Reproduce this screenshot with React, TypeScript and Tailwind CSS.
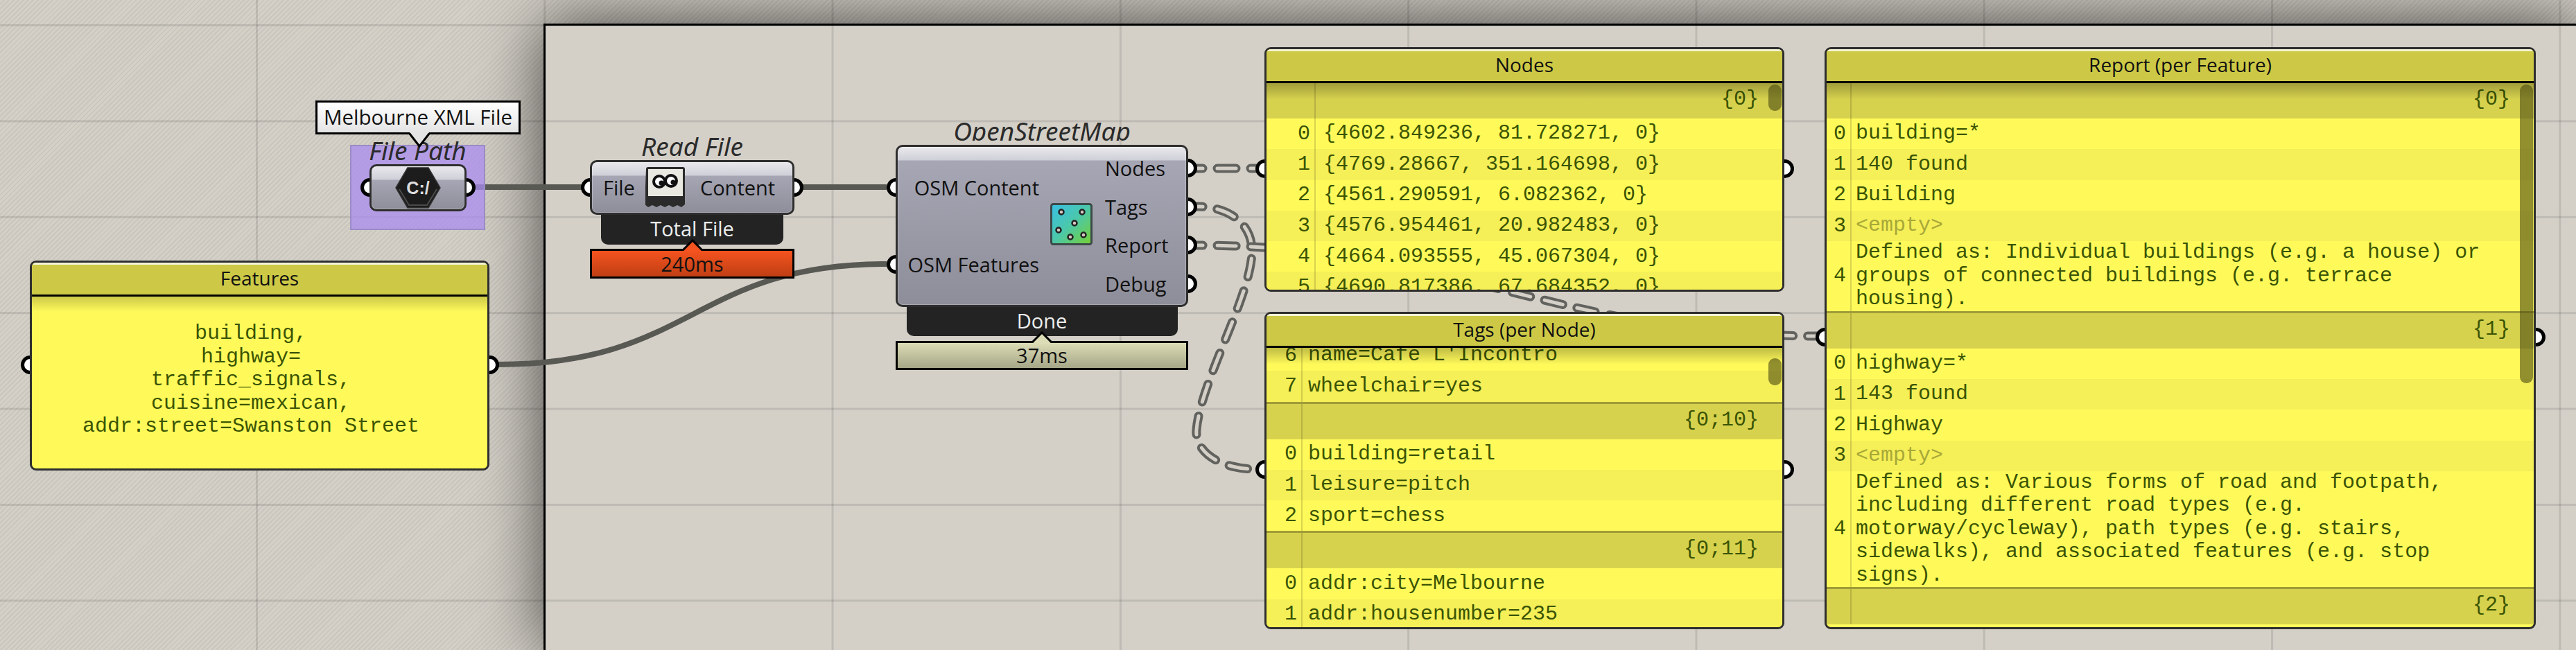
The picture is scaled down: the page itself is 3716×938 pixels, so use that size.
import type { ReactNode } from 'react';

const monoClass = 'font-["Liberation_Mono",monospace] text-[30px] text-[#3a5404]';
const labelClass = 'font-["Noto_Sans",sans-serif] text-[37px] italic leading-[40px] text-[#2b2b2b]';

const Port = ({ className }: { className: string }) => (
    <div className={`h-[27px] w-[27px] rounded-full border-[5px] border-black bg-white ${className}`} />
);

const dashedWires = [
    'M1726 243H1812',
    'M1726 298C1772 298 1806 322 1806 362C1806 425 1732 550 1726 620C1723 652 1760 677 1812 677',
    'M1726 354C2100 354 2246 485 2622 485',
];

const Wires = () => (
    <svg className="absolute left-0 top-0" width={3716} height={938} fill="none">
        <path d="M686 270H1279" stroke="#595954" strokeWidth={8} />
        <path d="M718 526C1000 526 1000 381 1279 381" stroke="#595954" strokeWidth={8} />
        {dashedWires.map((d) => (
            <g key={d}>
                <path d={d} stroke="#62625e" strokeWidth={13} strokeDasharray="27 21" strokeDashoffset={-30} strokeLinecap="round" />
                <path d={d} stroke="#d4d0c8" strokeWidth={5} strokeDasharray="27 21" strokeDashoffset={-30} strokeLinecap="round" />
            </g>
        ))}
    </svg>
);

type BodyProps = { className: string; children: ReactNode };

const NodeBody = ({ className, children }: BodyProps) => (
    <div
        className={`relative rounded-[10px] border-[3px] border-[#2e2e2e] bg-[linear-gradient(#e9e9ed,#cfcfd8_19px,#a6a6b4_20px,#8e8e9a)] shadow-[inset_0_0_0_1px_rgba(255,255,255,0.25)] text-[29px] text-[#111] ${className}`}
    >
        {children}
    </div>
);

const SidePorts = () => (
    <>
        <Port className="absolute left-[-16px] top-1/2 -z-10 -mt-[14px]" />
        <Port className="absolute right-[-16px] top-1/2 -z-10 -mt-[14px]" />
    </>
);

const Strip = ({ className, children }: BodyProps) => (
    <div className={`flex items-center justify-center rounded-b-[10px] bg-[#232323] text-[29px] text-[#eee] ${className}`}>{children}</div>
);

const TimeBar = ({ className, tip, children }: BodyProps & { tip: string }) => (
    <div className={`relative flex w-full items-center justify-center border-[3px] border-black text-[29px] text-[#111] ${className}`}>
        <svg className="absolute left-1/2 top-[-17px] -ml-[16px]" width={32} height={18}>
            <polygon points="2,18 16,2 30,18" fill={tip} />
            <polyline points="2,16 16,2 30,16" fill="none" stroke="#000" strokeWidth={3} />
        </svg>
        {children}
    </div>
);

const HexIcon = () => (
    <svg width={66} height={60} viewBox="0 0 66 60">
        <polygon points="1,30 18,1 48,1 65,30 48,59 18,59" fill="#1c1c1c" stroke="#333" strokeWidth={1.5} />
        <polyline points="6,32 20,55 46,55 60,32" fill="none" stroke="#4a4a4a" strokeWidth={2} />
        <text x={33} y={39} textAnchor="middle" fontFamily="Liberation Sans" fontWeight={700} fontSize={25} fill="#ddd">
            C:/
        </text>
    </svg>
);

const ReaderIcon = () => (
    <svg width={58} height={60} viewBox="0 0 58 60">
        <path d="M1 4a3 3 0 0 1 3-3h50a3 3 0 0 1 3 3v51l-5 4-6-3-6 3-6-3-6 3-6-3-6 3-6-3-6 3-5-4z" fill="#2b2b2b" />
        <rect x={4} y={4} width={50} height={39} fill="#e9e9e2" />
        <circle cx={20} cy={22} r={8} fill="#fff" stroke="#111" strokeWidth={4} />
        <circle cx={37} cy={21} r={8} fill="#fff" stroke="#111" strokeWidth={4} />
        <circle cx={23} cy={24} r={3.5} fill="#111" />
        <circle cx={40} cy={23} r={3.5} fill="#111" />
    </svg>
);

const dots = [
    [16, 13],
    [46, 13],
    [35, 29],
    [12, 39],
    [29, 49],
    [48, 46],
];

const DotsIcon = () => (
    <svg width={61} height={61} viewBox="0 0 61 61">
        <defs>
            <linearGradient id="dots" x1="0" y1="0" x2="1" y2="1">
                <stop offset="0" stopColor="#38bfe6" />
                <stop offset="0.5" stopColor="#4cc8a8" />
                <stop offset="1" stopColor="#76d030" />
            </linearGradient>
        </defs>
        <rect x={1.5} y={1.5} width={58} height={58} rx={3} fill="url(#dots)" stroke="#3c4a48" strokeWidth={3} />
        {dots.map(([x, y]) => (
            <circle key={`${x}-${y}`} cx={x} cy={y} r={3.5} fill="#d9c9c4" stroke="#222" strokeWidth={2.5} />
        ))}
    </svg>
);

type Row = { i?: number; text?: string[]; group?: string; first?: boolean; empty?: boolean };

const rows = (start: number, lines: string[]): Row[] => lines.map((line, n) => ({ i: start + n, text: [line] }));

const PanelRow = ({ row, indexClass, textClass }: { row: Row; indexClass: string; textClass: string }) => {
    if (row.group) {
        return (
            <div className={`flex shrink-0 bg-[#d7d24e] ${row.first ? 'h-[51px]' : 'h-[54px] border-t-[3px] border-[#a09c38]'}`}>
                <div className={`shrink-0 border-r-2 border-black/15 ${indexClass}`} />
                <div className="flex flex-1 items-center justify-end pb-[4px] pr-[34px]">{row.group}</div>
            </div>
        );
    }
    const lines = row.text ?? [];
    const odd = (row.i ?? 0) % 2 === 1;
    return (
        <div className={`flex shrink-0 items-center ${odd ? 'bg-[#f5ef58]' : 'bg-[#fffa5a]'} ${lines.length > 1 ? '' : 'h-[44.3px]'}`}>
            <div className={`flex shrink-0 items-center justify-end self-stretch border-r-2 border-black/15 pr-[6px] ${indexClass}`}>{row.i}</div>
            <div className={`leading-[33.5px] ${textClass} ${row.empty ? 'text-[#a8a838]' : ''}`}>
                {lines.map((line) => (
                    <div key={line} className="whitespace-pre">
                        {line}
                    </div>
                ))}
            </div>
        </div>
    );
};

const PanelFrame = ({ className, title, children }: { className: string; title: string; children: ReactNode }) => (
    <div className={`absolute z-0 ${className}`}>
        <Port className="absolute left-[-13px] top-1/2 -z-10 -mt-[15px]" />
        <Port className="absolute right-[-14px] top-1/2 -z-10 -mt-[15px]" />
        <div className="flex h-full flex-col overflow-hidden rounded-[9px] border-[3px] border-[#2e2e2e] bg-[#fffa5a]">
            <div className="flex h-[49px] shrink-0 items-center justify-center border-b-[3px] border-black bg-[#cdc946] pb-[2px] text-[28px] text-[#111] shadow-[inset_0_3px_0_#f4f3d6]">
                {title}
            </div>
            <div className={`relative min-h-0 flex-1 overflow-hidden ${monoClass}`}>{children}</div>
        </div>
    </div>
);

type DataPanelProps = {
    className: string;
    title: string;
    rowsData: Row[];
    indexClass: string;
    textClass: string;
    scrollClass: string;
    offsetClass?: string;
};

const DataPanel = ({ className, title, rowsData, indexClass, textClass, scrollClass, offsetClass }: DataPanelProps) => (
    <PanelFrame className={className} title={title}>
        <div className={`flex flex-col ${offsetClass ?? ''}`}>
            {rowsData.map((row, n) => (
                <PanelRow key={n} row={row} indexClass={indexClass} textClass={textClass} />
            ))}
        </div>
        <div className="absolute inset-x-0 top-0 h-[24px] bg-linear-to-b from-black/25 to-transparent" />
        <div className={`absolute right-[1px] w-[19px] rounded-[9px] bg-[#4a4a10]/60 ${scrollClass}`} />
    </PanelFrame>
);

const nodesRows: Row[] = [
    { group: '{0}', first: true },
    ...rows(0, [
        '{4602.849236, 81.728271, 0}',
        '{4769.28667, 351.164698, 0}',
        '{4561.290591, 6.082362, 0}',
        '{4576.954461, 20.982483, 0}',
        '{4664.093555, 45.067304, 0}',
        '{4690.817386, 67.684352, 0}',
    ]),
];

const tagsRows: Row[] = [
    ...rows(6, ["name=Cafe L'Incontro", 'wheelchair=yes']),
    { group: '{0;10}' },
    ...rows(0, ['building=retail', 'leisure=pitch', 'sport=chess']),
    { group: '{0;11}' },
    ...rows(0, ['addr:city=Melbourne', 'addr:housenumber=235']),
];

const reportRows: Row[] = [
    { group: '{0}', first: true },
    ...rows(0, ['building=*', '140 found', 'Building']),
    { i: 3, text: ['<empty>'], empty: true },
    { i: 4, text: ['Defined as: Individual buildings (e.g. a house) or', 'groups of connected buildings (e.g. terrace', 'housing).'] },
    { group: '{1}' },
    ...rows(0, ['highway=*', '143 found', 'Highway']),
    { i: 3, text: ['<empty>'], empty: true },
    {
        i: 4,
        text: [
            'Defined as: Various forms of road and footpath,',
            'including different road types (e.g.',
            'motorway/cycleway), path types (e.g. stairs,',
            'sidewalks), and associated features (e.g. stop',
            'signs).',
        ],
    },
    { group: '{2}' },
];

const featureLines = ['building,', 'highway=', 'traffic_signals,', 'cuisine=mexican,', 'addr:street=Swanston Street'];

const App = () => {
    return (
        <div className='relative h-[938px] w-[3716px] overflow-hidden bg-[repeating-linear-gradient(135deg,#d4d0c8_0,#d4d0c8_3px,#c9c6bd_3px,#c9c6bd_5px)] font-["Open_Sans","Noto_Sans",sans-serif]'>
            {/* main window over the hatched canvas */}
            <div className="absolute bottom-0 left-[784px] right-0 top-[34px] border-l-[3px] border-t-[3px] border-black bg-[#d4d0c8] shadow-[0_0_90px_rgba(0,0,0,0.7)]" />
            <div className="absolute inset-0 bg-[linear-gradient(rgba(0,0,0,0.1)_3px,transparent_3px),linear-gradient(90deg,rgba(0,0,0,0.1)_3px,transparent_3px)] bg-[size:415.3px_138.4px] bg-[position:369px_35px]" />

            <Wires />

            {/* File Path in its group */}
            <div className="absolute left-[505px] top-[209px] z-0 flex h-[123px] w-[195px] flex-col items-center border-2 border-[#9a8bc6] bg-[#ab8cf0]/75">
                <div className={`-mt-[14px] h-[40px] ${labelClass}`}>File Path</div>
                <NodeBody className="flex h-[68px] w-[140px] items-center justify-center">
                    <SidePorts />
                    <HexIcon />
                </NodeBody>
                <div className="absolute left-[-52px] top-[-66px] flex h-[49px] w-[296px] items-center justify-center border-[3px] border-black bg-linear-to-b from-white to-[#e4e4e4] text-[29.5px] text-[#111]">
                    Melbourne XML File
                    <svg className="absolute left-[131px] top-[43px]" width={32} height={24}>
                        <polygon points="2,0 16,20 30,0" fill="#e4e4e4" />
                        <polyline points="2,2 16,20 30,2" fill="none" stroke="#000" strokeWidth={3} />
                    </svg>
                </div>
            </div>

            {/* Read File */}
            <div className="absolute left-[851px] top-[191px] z-0 flex w-[295px] flex-col items-center">
                <div className={`h-[40px] ${labelClass}`}>Read File</div>
                <NodeBody className="flex h-[79px] w-full items-center pl-[16px]">
                    <SidePorts />
                    File
                    <div className="ml-[15px] mr-[21px] mt-[-2px]">
                        <ReaderIcon />
                    </div>
                    Content
                </NodeBody>
                <Strip className="h-[43px] w-[263px] pb-[3px]">Total File</Strip>
                <TimeBar className="mt-[6px] h-[43px] bg-linear-to-b from-[#f5531f] to-[#bf3f14]" tip="#f5531f">
                    240ms
                </TimeBar>
            </div>

            {/* OpenStreetMap */}
            <div className="absolute left-[1292px] top-[169px] z-0 flex w-[422px] flex-col items-center">
                <div className={`mb-[6px] h-[34px] overflow-hidden ${labelClass}`}>OpenStreetMap</div>
                <NodeBody className="flex h-[234px] w-full py-[3px]">
                    <div className="absolute inset-y-0 left-[-16px] -z-10 flex flex-col py-[3px]">
                        <div className="flex h-[111px] items-center">
                            <Port className="" />
                        </div>
                        <div className="flex h-[111px] items-center">
                            <Port className="" />
                        </div>
                    </div>
                    <div className="absolute inset-y-0 right-[-16px] -z-10 flex flex-col py-[3px]">
                        {['Nodes', 'Tags', 'Report', 'Debug'].map((name) => (
                            <div key={name} className="flex h-[55.5px] items-center">
                                <Port className="" />
                            </div>
                        ))}
                    </div>
                    <div className="flex w-[204px] flex-col items-end">
                        <div className="flex h-[111px] items-center">OSM Content</div>
                        <div className="flex h-[111px] items-center">OSM Features</div>
                    </div>
                    <div className="ml-[16px] mr-[18px] flex items-center pb-[6px]">
                        <DotsIcon />
                    </div>
                    <div className="flex flex-col">
                        {['Nodes', 'Tags', 'Report', 'Debug'].map((name) => (
                            <div key={name} className="flex h-[55.5px] items-center">
                                {name}
                            </div>
                        ))}
                    </div>
                </NodeBody>
                <Strip className="h-[42px] w-[391px] pb-[2px]">Done</Strip>
                <TimeBar className="mt-[7px] h-[42px] bg-linear-to-b from-[#dcdcb6] to-[#a6a788]" tip="#dcdcb6">
                    37ms
                </TimeBar>
            </div>

            <PanelFrame className="left-[43px] top-[376px] h-[303px] w-[663px]" title="Features">
                <div className="absolute inset-x-0 top-0 h-[22px] bg-linear-to-b from-black/20 to-transparent" />
                <div className="flex h-full flex-col items-center justify-center pb-[6px] pr-[25px] leading-[33.5px]">
                    {featureLines.map((line) => (
                        <div key={line}>{line}</div>
                    ))}
                </div>
            </PanelFrame>

            <DataPanel
                className="left-[1824px] top-[68px] h-[353px] w-[750px]"
                title="Nodes"
                rowsData={nodesRows}
                indexClass="w-[71px]"
                textClass="pl-[11px]"
                scrollClass="top-[2px] h-[38px]"
            />

            <DataPanel
                className="left-[1824px] top-[450px] h-[458px] w-[750px]"
                title="Tags (per Node)"
                rowsData={tagsRows}
                indexClass="w-[52px]"
                textClass="pl-[8px]"
                scrollClass="top-[15px] h-[39px]"
                offsetClass="-mt-[11px]"
            />

            <DataPanel
                className="left-[2632px] top-[68px] h-[840px] w-[1026px]"
                title="Report (per Feature)"
                rowsData={reportRows}
                indexClass="w-[36px]"
                textClass="pl-[6px]"
                scrollClass="top-[2px] h-[431px]"
            />
        </div>
    );
};

export default App;
